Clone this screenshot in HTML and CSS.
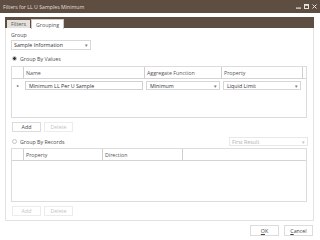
FILE: index.html
```html
<!DOCTYPE html>
<html>
<head>
<meta charset="utf-8">
<link rel="stylesheet" href="styles.css">
</head>
<body>
<div class="win">
  <div class="titlebar">
    <span class="title">Filters for LL U Samples Minimum</span>
    <span class="ctrls">
      <svg width="5" height="5" viewBox="0 0 5 5"><rect x="0" y="3.5" width="5" height="1.2" fill="#e8e2dc"/></svg>
      <svg width="5" height="5" viewBox="0 0 5 5"><rect x="0.5" y="0.5" width="4" height="4" fill="none" stroke="#e8e2dc" stroke-width="1"/><rect x="0.5" y="0.5" width="4" height="1.3" fill="#e8e2dc"/></svg>
      <svg width="5" height="5" viewBox="0 0 5 5"><path d="M0.5 0.5L4.5 4.5M4.5 0.5L0.5 4.5" stroke="#e8e2dc" stroke-width="1"/></svg>
    </span>
  </div>
  <div class="body">
    <div class="tabbar">
      <div class="tab">Filters</div>
      <div class="tab active">Grouping</div>
    </div>
    <div class="panel">
      <div class="lbl">Group</div>
      <div class="select sel-group"><span>Sample Information</span><span class="arr">▾</span></div>
      <div class="radio-row"><span class="radio on"></span><span>Group By Values</span></div>
      <div class="grid grid1">
        <div class="ghead">
          <div class="c ind"></div>
          <div class="c c-name">Name</div>
          <div class="c c-agg">Aggregate Function</div>
          <div class="c c-prop">Property</div>
          <div class="c c-rest"></div>
        </div>
        <div class="grow">
          <div class="ind arrow">▸</div>
          <div class="cell c-name"><div class="inp">Minimum LL Per U Sample</div></div>
          <div class="cell c-agg"><div class="combo"><span>Minimum</span><span class="arr">▾</span></div></div>
          <div class="cell c-prop"><div class="combo"><span>Liquid Limit</span><span class="arr">▾</span></div></div>
        </div>
      </div>
      <div class="btns">
        <div class="btn">Add</div>
        <div class="btn dis">Delete</div>
      </div>
      <div class="radio-row r2">
        <span class="radio"></span><span>Group By Records</span>
        <div class="select sel-first dis"><span>First Result</span><span class="arr">▾</span></div>
      </div>
      <div class="grid grid2">
        <div class="ghead">
          <div class="c ind"></div>
          <div class="c c-p2">Property</div>
          <div class="c c-dir">Direction</div>
          <div class="c c-rest2"></div>
        </div>
      </div>
      <div class="btns">
        <div class="btn dis">Add</div>
        <div class="btn dis">Delete</div>
      </div>
    </div>
    <div class="footer">
      <div class="btn fbtn"><u>O</u>K</div>
      <div class="btn fbtn"><u>C</u>ancel</div>
    </div>
  </div>
</div>
</body>
</html>
```
FILE: styles.css
```css
* { box-sizing: border-box; }
html, body { margin: 0; padding: 0; background: #fff; }
body { width: 320px; height: 240px; overflow: hidden; font-family: "Open Sans", "Noto Sans", sans-serif; font-size: 5.3px; color: #4a4a4a; }
.win { width: 320px; height: 240px; display: flex; flex-direction: column; }
.titlebar { height: 13px; background: #5e4e42; color: #e6dfd8; display: flex; align-items: center; justify-content: space-between; padding: 0 3px 0 3px; font-size: 5.2px; }
.ctrls { display: flex; gap: 3px; align-items: center; }
.ctrls svg { display: block; }
.body { flex: 1; padding: 4px 6px 0 5px; display: flex; flex-direction: column; }
.tabbar { height: 11px; background: #5e4e42; display: flex; align-items: flex-end; padding-left: 2px; gap: 1px; }
.tab { height: 8px; padding: 0 4px; background: #e4e0dc; color: #555; display: flex; align-items: center; }
.tab.active { height: 10px; background: #fff; border: 1px solid #cfc8c2; border-bottom: none; padding: 0 4px; margin-bottom: -1px; }
.panel { height: 193px; border: 1px solid #e2e2e2; border-top: none; padding: 4px 5px 0 5px; display: flex; flex-direction: column; }
.lbl { height: 7px; line-height: 7px; margin-bottom: 1px; }
.select { height: 10px; border: 1px solid #d8d8d8; display: flex; align-items: center; justify-content: space-between; padding: 0 2px 0 2px; color: #333; }
.arr { font-size: 5px; color: #777; }
.sel-group { width: 80px; }
.radio-row { display: flex; align-items: center; gap: 3px; height: 7px; margin-top: 5px; padding-left: 1px; }
.radio { width: 5px; height: 5px; border-radius: 50%; border: 1px solid #c4c4c4; background: #fff; }
.radio.on { border-color: #bbb; background: radial-gradient(circle, #333 0 1.3px, #fff 1.6px); }
.r2 { margin-top: 5px; height: 9px; }
.sel-first { margin-left: auto; width: 79px; height: 9px; color: #b0b0b0; border-color: #e8e8e8; }
.sel-first .arr { color: #c0c0c0; }
.grid { border: 1px solid #dcdcdc; margin-right: 1px; }
.grid1 { height: 52px; margin-top: 4px; }
.grid2 { height: 54px; margin-top: 2px; }
.ghead { display: flex; height: 12px; border-bottom: 1px solid #d4d4d4; }
.ghead .c { height: 100%; border-right: 1px solid #cfcfcf; display: flex; align-items: center; padding-left: 2px; color: #555; }
.ghead .c:last-child { border-right: none; }
.ind { width: 12px; flex: none; }
.c-name { width: 121px; flex: none; }
.c-agg { width: 77px; flex: none; }
.c-prop { width: 81px; flex: none; }
.c-rest { flex: 1; }
.c-p2 { width: 79px; flex: none; }
.c-dir { width: 80px; flex: none; }
.c-rest2 { flex: 1; }
.grow { display: flex; height: 11px; margin-top: 1px; align-items: center; }
.arrow { font-size: 4px; text-align: center; color: #555; }
.cell { height: 100%; padding: 1px 2px 1px 1px; }
.inp { height: 100%; border: 1px solid #d0d0d0; display: flex; align-items: center; padding-left: 3px; color: #333; }
.combo { height: 100%; border: 1px solid #d6d6d6; display: flex; align-items: center; justify-content: space-between; padding: 0 2px 0 3px; color: #333; }
.btns { display: flex; gap: 3px; margin-top: 4px; padding-left: 1px; }
.btn { width: 29px; height: 10px; border: 1px solid #dcdcdc; display: flex; align-items: center; justify-content: center; color: #444; }
.btn.dis { color: #c4c4c4; border-color: #ececec; }
.footer { display: flex; justify-content: flex-end; gap: 5px; margin-top: 4px; padding-right: 1px; }
.fbtn { width: 29px; height: 11px; }
.fbtn u { text-decoration: underline; }
```
